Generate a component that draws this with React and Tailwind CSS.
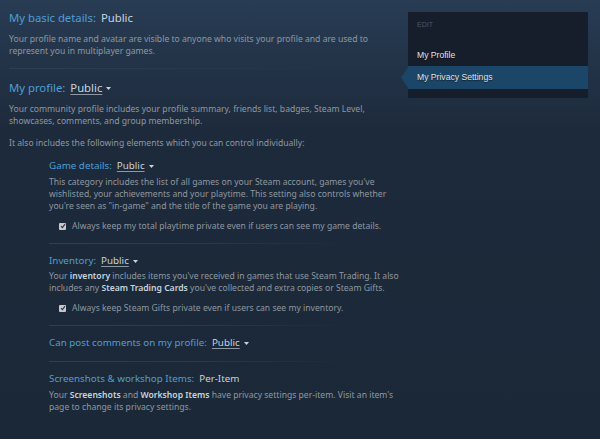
import React from "react";

const F = { fontFamily: '"Noto Sans", "Open Sans", sans-serif' };

function Drop({ children }) {
  return (
    <span className="inline-flex items-center text-[#c6d4df]">
      <span className="underline decoration-[#8f98a0] underline-offset-2">{children}</span>
      <svg width="5" height="3" viewBox="0 0 5 3" className="ml-[4px] mt-[1px]">
        <path d="M0 0 L5 0 L2.5 3 Z" fill="#c6d4df" />
      </svg>
    </span>
  );
}

function Check({ children }) {
  return (
    <div className="flex items-center h-[12px] pl-[10px] text-[8.6px] leading-[12px] text-[#8f98a0]">
      <span className="w-[7px] h-[7px] bg-[#c6c9cc] rounded-[1px] flex items-center justify-center mr-[6px]">
        <svg width="6" height="6" viewBox="0 0 6 6">
          <path d="M1 3.2 L2.4 4.6 L5 1.2" stroke="#2a3340" strokeWidth="1.1" fill="none" />
        </svg>
      </span>
      <span className="whitespace-nowrap">{children}</span>
    </div>
  );
}

function Divider({ mt, w }) {
  return (
    <div
      className={`h-px ${mt} ${w} bg-gradient-to-r from-[#2f3e52] via-[#2a394c] to-transparent`}
    />
  );
}

function Lines({ lines, cls }) {
  return (
    <div className={`text-[8.6px] leading-[12px] text-[#8f98a0] ${cls}`}>
      {lines.map((l, i) => (
        <div key={i} className="whitespace-nowrap">{l}</div>
      ))}
    </div>
  );
}

const B = ({ children }) => <b className="font-semibold text-[#c6d4df]">{children}</b>;

export default function App() {
  return (
    <div
      className="w-[600px] h-[439px] overflow-hidden flex bg-gradient-to-b from-[#283c54] via-[#1d2a3b] via-30% to-[#1b2838]"
      style={F}
    >
      <div className="w-[400px] pl-[9px] pt-[10px]">
        <div className="text-[11.3px] leading-[16px] text-[#4f9ed6]">
          My basic details:<span className="ml-[5px] text-[#c6d4df]">Public</span>
        </div>
        <Lines
          cls="mt-[7px]"
          lines={[
            "Your profile name and avatar are visible to anyone who visits your profile and are used to",
            "represent you in multiplayer games.",
          ]}
        />
        <Divider mt="mt-[11px]" w="w-[330px]" />
        <div className="mt-[11px] text-[11.3px] leading-[16px] text-[#4f9ed6] flex items-center">
          My profile:<span className="ml-[5px]"><Drop>Public</Drop></span>
        </div>
        <Lines
          cls="mt-[7px]"
          lines={[
            "Your community profile includes your profile summary, friends list, badges, Steam Level,",
            "showcases, comments, and group membership.",
          ]}
        />
        <Lines cls="mt-[10px]" lines={["It also includes the following elements which you can control individually:"]} />

        <div className="pl-[40px]">
          <div className="mt-[9px] text-[9.8px] leading-[16px] text-[#4f9ed6] flex items-center">
            Game details:<span className="ml-[5px]"><Drop>Public</Drop></span>
          </div>
          <Lines
            cls="mt-[2px]"
            lines={[
              "This category includes the list of all games on your Steam account, games you've",
              "wishlisted, your achievements and your playtime. This setting also controls whether",
              "you're seen as \"in-game\" and the title of the game you are playing.",
            ]}
          />
          <div className="mt-[8px]">
            <Check>Always keep my total playtime private even if users can see my game details.</Check>
          </div>
          <Divider mt="mt-[11px]" w="w-[300px]" />

          <div className="mt-[9px] text-[9.8px] leading-[16px] text-[#4f9ed6] flex items-center">
            Inventory:<span className="ml-[5px]"><Drop>Public</Drop></span>
          </div>
          <Lines
            cls="mt-[1px]"
            lines={[
              <>Your <B>inventory</B> includes items you've received in games that use Steam Trading. It also</>,
              <>includes any <B>Steam Trading Cards</B> you've collected and extra copies or Steam Gifts.</>,
            ]}
          />
          <div className="mt-[8px]">
            <Check>Always keep Steam Gifts private even if users can see my inventory.</Check>
          </div>
          <Divider mt="mt-[11px]" w="w-[300px]" />

          <div className="mt-[9px] text-[9.8px] leading-[16px] text-[#4f9ed6] flex items-center">
            Can post comments on my profile:<span className="ml-[5px]"><Drop>Public</Drop></span>
          </div>
          <Divider mt="mt-[10px]" w="w-[300px]" />

          <div className="mt-[9px] text-[9.8px] leading-[16px] text-[#4f9ed6]">
            Screenshots &amp; workshop Items:<span className="ml-[5px] text-[#c6d4df]">Per-Item</span>
          </div>
          <Lines
            cls="mt-[2px]"
            lines={[
              <>Your <B>Screenshots</B> and <B>Workshop Items</B> have privacy settings per-item. Visit an item's</>,
              "page to change its privacy settings.",
            ]}
          />
        </div>
      </div>

      <div className="ml-[8px] mt-[12px] w-[180px] h-[86px] bg-[#171e2b] flex flex-col" style={{ fontFamily: '"Liberation Sans", Arial, sans-serif' }}>
        <div className="pl-[9px] pt-[9px] text-[7px] leading-[8px] text-[#4a5666]">EDIT</div>
        <div className="pl-[9px] mt-[20px] text-[8.6px] leading-[12px] text-[#e1e4e8] [text-shadow:0_1px_1px_rgba(0,0,0,0.6)]">
          My Profile
        </div>
        <div className="relative mt-[5px] h-[23px] bg-[#1b4668] flex items-center pl-[9px] text-[8.6px] text-[#e1e4e8] [text-shadow:0_1px_1px_rgba(0,0,0,0.6)]">
          <svg width="8" height="23" viewBox="0 0 8 23" className="absolute left-[-7px] top-0">
            <path d="M8 0 L0 11.5 L8 23 Z" fill="#1b4668" />
          </svg>
          My Privacy Settings
        </div>
      </div>
    </div>
  );
}
